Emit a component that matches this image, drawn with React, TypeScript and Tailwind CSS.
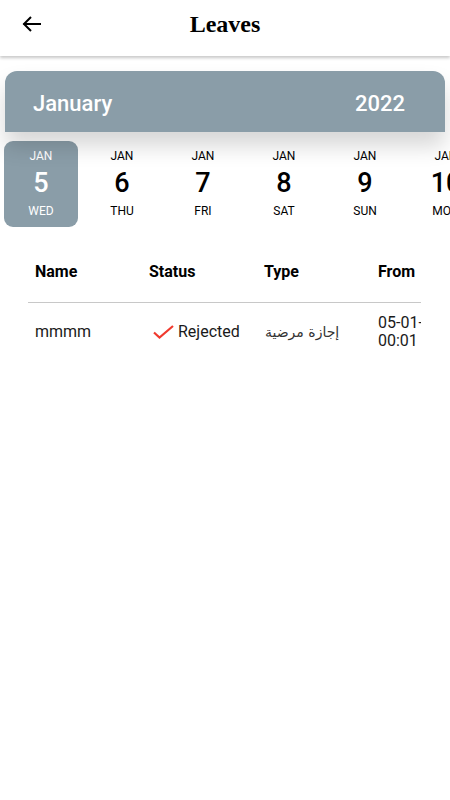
import React from "react";

const days = [
  { d: "5", w: "WED", sel: true },
  { d: "6", w: "THU" },
  { d: "7", w: "FRI" },
  { d: "8", w: "SAT" },
  { d: "9", w: "SUN" },
  { d: "10", w: "MON" },
];

export default function App() {
  return (
    <div className="w-[450px] h-[800px] bg-white overflow-hidden relative" style={{ fontFamily: "Roboto, 'Noto Sans', sans-serif" }}>
      <div className="h-14 flex items-center relative bg-white shadow-[0_2px_3px_rgba(0,0,0,0.22)] z-10">
        <div className="absolute left-[20px] top-[12px]">
          <svg width="24" height="24" viewBox="0 0 24 24" fill="none" stroke="black" strokeWidth="2" strokeLinecap="square">
            <path d="M20 12H4.5" />
            <path d="M11 5l-7 7 7 7" strokeLinecap="butt" />
          </svg>
        </div>
        <div className="w-full text-center text-[24px] font-bold text-black pb-[8px]" style={{ fontFamily: "'Liberation Serif', serif" }}>
          Leaves
        </div>
      </div>

      <div className="mt-[15px] mx-[5px] h-[61px] pt-[3px] bg-[#8a9da8] rounded-t-[12px] flex items-center justify-between pl-[28px] pr-[40px] text-white text-[22px] font-medium shadow-[0_14px_22px_rgba(0,0,0,0.16)] relative">
        <span>January</span>
        <span>2022</span>
      </div>

      <div className="mt-[9px] flex gap-[7px] pl-[4px] whitespace-nowrap">
        {days.map((x) => (
          <div
            key={x.d}
            className={`shrink-0 w-[74px] h-[86px] rounded-[9px] flex flex-col items-center pt-[8px] ${x.sel ? "bg-[#8a9da8] text-white" : "text-black"}`}
          >
            <div className="text-[12px] leading-[14px]">JAN</div>
            <div className="text-[27px] leading-[30px] mt-[5px] font-medium">{x.d}</div>
            <div className="text-[12px] leading-[14px] mt-[6px]">{x.w}</div>
          </div>
        ))}
      </div>

      <div className="mt-[14px] ml-[28px] w-[393px] overflow-hidden">
        <div className="w-[520px]">
          <div className="flex h-[62px] items-center border-b border-[#c8c8c8] text-[16px] font-bold text-black">
            <div className="w-[114px] pl-[7px]">Name</div>
            <div className="w-[115px] pl-[7px]">Status</div>
            <div className="w-[114px] pl-[7px]">Type</div>
            <div className="w-[115px] pl-[7px]">From</div>
          </div>
          <div className="flex h-[58px] items-center text-[16px] text-[#1a1a1a]">
            <div className="w-[114px] pl-[7px]">mmmm</div>
            <div className="w-[115px] pl-[11px] flex items-center gap-[4px] text-[16px]">
              <svg width="21" height="14" viewBox="0 0 21 14" fill="none" stroke="#f03a2e" strokeWidth="2.2">
                <path d="M1 7.5l5.5 5L20 1" />
              </svg>
              <span>Rejected</span>
            </div>
            <div className="w-[114px] pl-[8px] text-[14px] text-[#333]" style={{ fontFamily: "'DejaVu Sans', 'Noto Sans', sans-serif" }}>
              <span dir="rtl">إجازة مرضية</span>
            </div>
            <div className="w-[115px] pl-[7px] leading-[18px] text-[16px]">
              <div>05-01-2022</div>
              <div>00:01</div>
            </div>
          </div>
        </div>
      </div>
    </div>
  );
}
